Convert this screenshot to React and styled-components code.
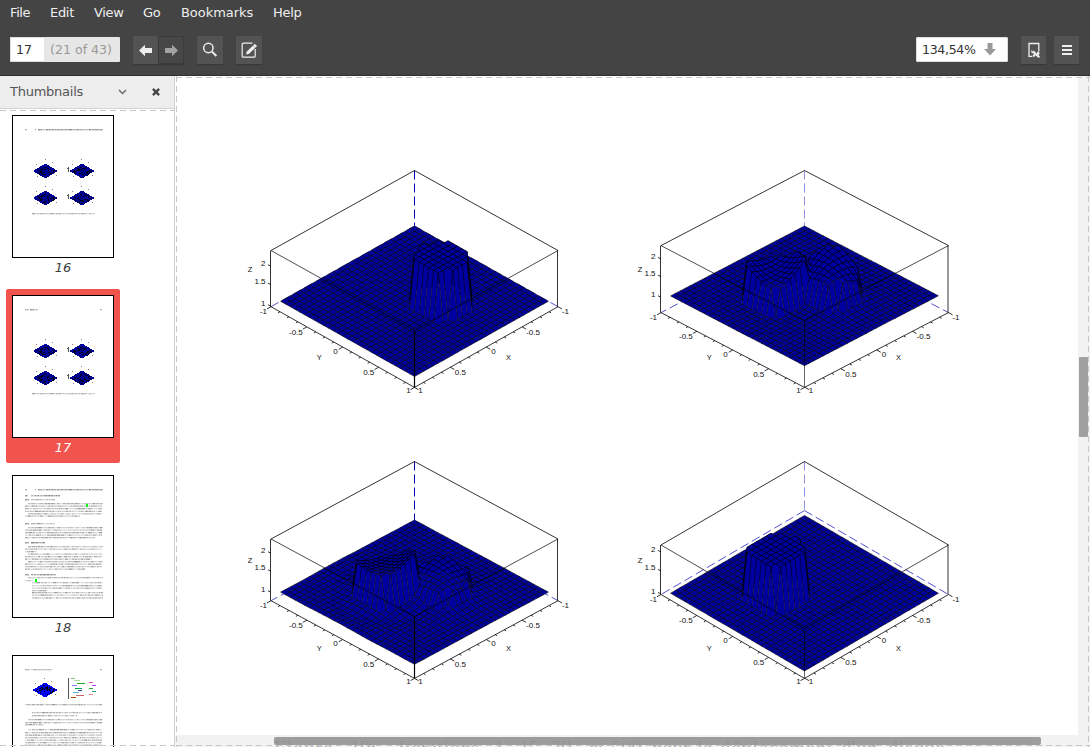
import React from "react";
import styled, { createGlobalStyle } from "styled-components";

const Global = createGlobalStyle`
  * { box-sizing: border-box; }
  body { margin: 0; overflow: hidden; background: #fff; }
`;
const App_ = styled.div`
  width: 1090px; height: 747px; display: flex; flex-direction: column; overflow: hidden;
  font: 13px "DejaVu Sans", sans-serif; color: #3c3c3c; background: #fff;
`;
const Header = styled.header`
  height: 76px; flex: none; background: #444; border-bottom: 1px solid #303030;
`;
const MenuBar = styled.nav`
  height: 26px; padding: 0 10px; display: flex; align-items: center; color: #eee;
`;
const MenuItem = styled.span`
  line-height: 26px; width: ${(p) => p.$w}px; letter-spacing: ${(p) => p.$track}px; white-space: nowrap;
`;
const Toolbar = styled.div`
  height: 48px; padding: 0 11px 0 10px; display: flex; align-items: center;
`;
const PageBox = styled.div`
  width: 110px; height: 25px; margin-bottom: 1px; display: flex; line-height: 25px; border-radius: 1px; overflow: hidden;
  background: #e6e6e6; color: #999; font-size: 12.6px;
`;
const PageInput = styled.span`
  width: 34px; padding-left: 5px; margin-right: 6px; background: #fff; color: #333; border: 1px solid #ddd; line-height: 23px; border-right: 0;
`;
const PageCount = styled.span` white-space: nowrap; `;
const ToolButton = styled.button`
  width: ${(p) => p.$w || 25}px; height: 28px; padding: 0; margin-left: ${(p) => p.$gap || 0}px;
  border: ${(p) => (p.$disabled ? "1px solid #3b3b3b" : "0")};
  background: ${(p) => (p.$disabled ? "#474747" : "#535353")};
  box-shadow: 0 1px 1px rgba(0,0,0,.15);
  display: flex; align-items: center; justify-content: center;
`;
const Spacer = styled.div` flex: 1; `;
const ZoomBox = styled.div`
  width: 92px; height: 25px; margin-bottom: 1px; background: #fff; border: 1px solid #ddd; display: flex; align-items: center; border-radius: 1px;
  padding: 0 11px 0 5px; justify-content: space-between; color: #333; white-space: nowrap; font-size: 12.6px;
`;
const ZoomValue = styled.span` letter-spacing: -.35px; `;
const Body = styled.div` flex: 1; min-height: 0; display: flex; `;
const Sidebar = styled.aside`
  width: 175px; flex: none; border-right: 1px solid #d0d0d0; display: flex; flex-direction: column; overflow: hidden;
`;
const SideHead = styled.div`
  height: 33px; flex: none; background: #ededed; border-bottom: 1px solid #d2d2d2; display: flex; align-items: center;
  padding: 0 14px 1px 10px; color: #555; gap: 25px; letter-spacing: -.25px;
`;
const SideTitle = styled.span` flex: 1; line-height: 31px; `;
const ThumbList = styled.div` position: relative; flex: 1; min-height: 0; padding: 0 6px; overflow: hidden; `;
const Thumb = styled.div`
  width: 114px; height: 174px; margin-bottom: 6px; padding: 6px 6px 0; border-radius: 2px;
  display: flex; flex-direction: column; align-items: center;
  background: ${(p) => (p.$active ? "#f0544c" : "transparent")}; color: ${(p) => (p.$active ? "#fff" : "#3c3c3c")};
  font-style: italic;
`;
const Paper = styled.svg` width: 102px; height: 143px; flex: none; background: #fff; border: 1px solid #000; display: block; `;
const ThumbLabel = styled.span` line-height: 20px; `;
const Document = styled.main` position: relative; flex: 1; overflow: hidden; background: #fff; padding: 75px 0 0 45px; `;
const PlotGrid = styled.div` display: grid; grid-template-columns: 390px 390px; grid-auto-rows: 291px; `;
const Plot = styled.svg` width: 390px; height: 291px; display: block; `;
const Caption = styled.div`
  margin-top: 3px; padding-left: 54px; display: flex; font: 20.5px/24px "Liberation Serif", serif; color: #333;
`;
const CaptionWord = styled.span` width: ${(p) => p.$w}px; flex: none; white-space: nowrap; letter-spacing: ${(p) => p.$track || 0}px; `;
const Edge = styled.div`
  position: absolute; ${(p) => p.$pos}
  background: repeating-linear-gradient(${(p) => (p.$vert ? "180deg" : "90deg")}, #c8c8c8 0 6px, transparent 6px 10px);
`;
const VTrack = styled.div` position: absolute; right: 0; top: 0; bottom: 0; width: 12px; background: rgba(235,235,235,.65); `;
const VThumb = styled.div` margin: 281px 0 0 1px; width: 9px; height: 80px; border-radius: 1px; background: #a0a0a0; `;
const HTrack = styled.div` position: absolute; left: 0; right: 12px; bottom: 0; height: 12px; background: rgba(235,235,235,.65); `;
const HThumb = styled.div` margin: 2px 0 0 99px; width: 767px; height: 8px; border-radius: 2px; background: rgba(145,145,145,.88); `;

const CX = 194.5;
const HALF = 143.5;
const N = 28;

/* Distance of a point from a disc centre, in screen-aligned axes (u to the right, v to the front). */
const disc = (u, v, cu, cv) => ({ du: (u - cu) / 0.39, dv: (v - cv) / 0.39 });
const inside = (d) => d.du * d.du + d.dv * d.dv <= 1.17;
const LEFT = [-0.39, 0.06];
const RIGHT = [0.38, 0.05];

const heights = {
  right: (u, v) => (inside(disc(u, v, ...RIGHT)) ? 47 : 0),
  left: (u, v) => (inside(disc(u, v, ...LEFT)) ? 46 : 0),
  saddle: (u, v) => {
    const a = disc(u, v, ...LEFT);
    const b = disc(u, v, ...RIGHT);
    if (inside(a)) return 26 + 11 * a.du * a.du - 1 * a.dv + 3 * a.du;
    if (inside(b)) return 34 - 11 * b.du * b.du - 5 * b.dv;
    const r = Math.hypot(a.du, a.dv);
    const q = Math.hypot(b.du, b.dv);
    return -2 * Math.exp(-(r - 1) * 1.6) + 4 * Math.exp(-(q - 1) * 2);
  },
  wave: (u, v) => {
    const a = disc(u, v, ...LEFT);
    const b = disc(u, v, ...RIGHT);
    if (inside(a)) return 29 + 8 * a.du * a.du + 6 * a.dv + 5 * a.du;
    if (inside(b)) return 21 - 9 * b.du * b.du - 3 * b.dv + (b.du > 0.85 ? 9 : 0);
    const r = Math.hypot(a.du, a.dv);
    const q = Math.hypot(b.du, b.dv);
    const back = Math.max(0, -a.dv) * 9 * Math.exp(-(r - 1) * 2);
    return back + 2.5 * Math.exp(-(r - 1) * 1.3) * Math.cos(r * 5) + 6 * Math.exp(-(q - 1) * 2);
  },
};

const plots = [
  { back: 75, front: 225.5, top: 99.5, bottom: 155.7, h: "right", z: [112.3, 130.7, 152.3], strong: true },
  { back: 75, front: 214.7, top: 94.6, bottom: 161.6, h: "saddle", z: [105, 122.7, 143.3] },
  { back: 78, front: 222.3, top: 97, bottom: 158.7, h: "wave", z: [108.3, 126.3, 147.3], strong: true },
  { back: 73.4, front: 229, top: 103, bottom: 152.5, h: "left", z: [107, 126, 149] },
];

/* Surface cells ordered from the back to the front, so that nearer cells cover farther ones. */
function quads(p) {
  const mid = (p.back + p.front) / 2;
  const k = (p.front - p.back) / 2 / 1.867;
  const pt = (i, j) => {
    const X = (i - 14) / 15;
    const Y = (j - 14) / 15;
    const u = Y - X;
    const v = X + Y;
    return { x: CX + (u * HALF) / 2, y: mid + v * k - heights[p.h](u, v) };
  };
  const out = [];
  for (let s = 0; s <= 2 * N - 2; s++)
    for (let i = Math.max(0, s - N + 1); i <= Math.min(N - 1, s); i++) {
      const j = s - i;
      const c = [pt(i, j), pt(i + 1, j), pt(i + 1, j + 1), pt(i, j + 1)];
      const ys = c.map((q) => q.y);
      out.push({
        points: c.map((q) => `${q.x.toFixed(1)},${q.y.toFixed(1)}`).join(" "),
        wall: Math.max(...ys) - Math.min(...ys) > 18,
      });
    }
  return out;
}

function Surface({ p }) {
  const L = CX - 143.5;
  const R = CX + 143.5 + (p.strong ? 0 : 0.5);
  const F = 236.4;
  const T = 19.5;
  const slope = F - p.bottom;
  const floorBack = p.bottom - slope;
  const frontTop = p.top + (p.top - T);
  const ticks = [];
  for (let n = 0; n <= 16; n++) {
    const t = n / 16;
    const len = n % 4 === 0 ? 4 : 2;
    const y = p.bottom + slope * t;
    ticks.push(`M${L + 143.5 * t} ${y}l${-len} ${len * 0.56}M${R - 143.5 * t} ${y}l${len} ${len * 0.56}`);
  }
  const names = ["-1", "-0.5", "0", "0.5", "1"];
  const dx = [-7.5, -11, -7.2, -10, -6.2];
  const dim = p.strong ? "#0000b4" : "#8f8fe4";
  return (
    <Plot viewBox="0 0 390 291">
      <g fill="none" stroke={dim} strokeDasharray="9 4">
        <path d={`M${CX} ${T}V${floorBack}`} />
        <path d={`M${CX} ${floorBack}L${L} ${p.bottom}M${CX} ${floorBack}L${R} ${p.bottom}`} stroke="#4040c8" strokeWidth=".9" />
      </g>
      <g fill="#0000a0" stroke="#000">
        {quads(p).map((q, i) => <polygon key={i} points={q.points} strokeWidth={q.wall ? 0.4 : 0.55} />)}
      </g>
      <g fill="none" stroke="#000" strokeWidth=".8">
        <path d={`M${L} ${p.top}L${CX} ${T}L${R} ${p.top}`} />
        <path d={`M${L} ${p.top}L${CX} ${frontTop}L${R} ${p.top}`} strokeWidth=".7" />
        <path d={`M${L} ${p.bottom}L${CX} ${F}L${R} ${p.bottom}`} />
        <path d={`M${L - 0.5} ${p.top}V${p.bottom}M${R - 0.5} ${p.top}V${p.bottom}`} />
        {p.strong
          ? <path d={`M${CX} ${frontTop}V${F}`} strokeWidth="1.2" />
          : <path d={`M${CX} ${frontTop}V${F}`} strokeWidth=".6" />}
        <path d={ticks.join("")} />
        <path d={p.z.map((z) => `M${L} ${z + 3}l-3 -1.6`).join("")} />
      </g>
      <g fill="#111" fontFamily='"Liberation Sans", sans-serif' fontSize="8" textAnchor="middle">
        {names.map((n, i) => {
          const y = p.bottom + (slope * i) / 4 + (i === 0 ? 7 : i === 2 ? 6.6 : 8);
          return (
            <React.Fragment key={n}>
              <text x={L + 35.9 * i + dx[i]} y={Math.min(y, 242.3)}>{n}</text>
              <text x={R - 35.9 * i - dx[i]} y={Math.min(y, 242.3)}>{n}</text>
            </React.Fragment>
          );
        })}
        <text x="99.3" y="209" fontSize="7.5">Y</text>
        <text x="288.5" y="209" fontSize="7.5">X</text>
        <text x="30" y="121.3" fontSize="7.5">Z</text>
        {["2", "1.5", "1"].map((n, i) => <text key={n} x={i === 1 ? 40 : 43.3} y={p.z[i] + (i === 1 ? 2 : 2.6)}>{n}</text>)}
      </g>
    </Plot>
  );
}

const noise = (n) => { const v = Math.sin(n * 127.1) * 43758.5; return v - Math.floor(v); };

/* A row of illegible micro text: short grey runs with uneven tone. */
function MicroLine({ x, y, w, seed = 1, bold }) {
  const runs = [];
  let at = x;
  let n = seed * 31;
  while (at < x + w) {
    const len = Math.min(1 + noise(n) * 3, x + w - at);
    runs.push(<rect key={n} x={at} y={y} width={len} height={bold ? 1.4 : 1.3} fillOpacity={(bold ? 0.28 : 0.16) + noise(n + 7) * 0.3} />);
    at += len + 0.45;
    n++;
  }
  return <g fill="#222">{runs}</g>;
}

function MiniPlot({ x, y, bright, axis }) {
  const specks = Array.from({ length: 42 }, (_, i) => {
    const a = (noise(i + x) - 0.5) * 18;
    const b = (noise(i * 3 + y) - 0.5) * 2 * (6 - Math.abs(a) * 0.5);
    return <rect key={i} x={Math.round(x + a)} y={Math.round(y + b)} width={i % 3 ? 1 : 2} height="1" />;
  });
  return (
    <g shapeRendering="crispEdges">
      <path d={`M${x - 12.5} ${y}L${x} ${y - 7.5}L${x + 12.5} ${y}L${x} ${y + 7.5}Z`} fill={bright ? "#0000f4" : "#000096"} />
      <g fill="#00001c">{specks}</g>
      <g fill="#888">
        <rect x={x - 1} y={y - 12} width="1" height="1" /><rect x={x + 6} y={y - 9} width="1" height="1" />
        <rect x={x - 10} y={y - 7} width="1" height="1" /><rect x={x - 9} y={y + 5} width="1" height="1" />
        <rect x={x + 10} y={y + 4} width="1" height="1" />
      </g>
      {axis && <path d={`M${x - 13.5} ${y - 4}v5M${x - 15.5} ${y - 3}h1`} stroke="#555" fill="none" />}
    </g>
  );
}

const FigurePage = ({ shortHead }) => (
  <Paper viewBox="0 0 100 141">
    {shortHead
      ? <><MicroLine x={12} y={13} w={4} /><MicroLine x={17} y={13} w={8} bold /><MicroLine x={87} y={13} w={2} /></>
      : <><MicroLine x={12} y={13} w={2} /><MicroLine x={22} y={13} w={1} /><MicroLine x={25} y={13} w={65} bold /></>}
    <MiniPlot x={32.5} y={55} /><MiniPlot x={69} y={55} axis />
    <MiniPlot x={32.5} y={82} /><MiniPlot x={69} y={82} axis />
    <MicroLine x={19} y={97} w={63} seed={3} />
  </Paper>
);

const bodyRows = [
  [15, 75, 27], [12, 77, 29.5], [12, 77, 32], [12, 77, 34.7], [15, 74, 37.2], [12, 55, 39.5],
  [15, 75, 51], [12, 77, 53.5], [12, 77, 56], [12, 77, 58.5], [12, 70, 61],
  [15, 75, 70], [12, 77, 72.5], [12, 12, 75], [15, 74, 77.5], [12, 77, 80], [12, 67, 82.5],
  [15, 75, 85], [12, 77, 87.5], [12, 77, 90], [12, 60, 92.5],
  [15, 75, 101], [12, 8, 104], [19, 71, 106], [19, 70, 109], [19, 70, 111.5], [19, 15, 114], [19, 71, 116], [19, 71, 118.5], [19, 71, 121.3],
];
const TextPage = () => (
  <Paper viewBox="0 0 100 141">
    <MicroLine x={12} y={13} w={2} /><MicroLine x={22} y={13} w={1} /><MicroLine x={25} y={13} w={65} bold />
    <MicroLine x={12} y={19} w={3} bold /><MicroLine x={18} y={19} w={29} bold seed={2} />
    {[[24, 24], [48, 24], [67, 14], [99, 25]].map(([y, w]) => (
      <g key={y}><MicroLine x={12} y={y - 1} w={4} bold /><MicroLine x={18} y={y - 1} w={w} seed={y} bold={w !== 24} /></g>
    ))}
    {bodyRows.map(([x, w, y], i) => <MicroLine key={y} x={x} y={y} w={w} seed={i + 5} />)}
    <rect x="73" y="28" width="2" height="3" fill="#0f0" /><rect x="22" y="103" width="2" height="3" fill="#0f0" />
  </Paper>
);
const MixedPage = () => (
  <Paper viewBox="0 0 100 141">
    <MicroLine x={12} y={13} w={27} /><MicroLine x={87} y={13} w={2} />
    <MiniPlot x={32} y={34} bright />
    <path d="M55.5 22v21" stroke="#555" />
    <g shapeRendering="crispEdges">
      {["#7c7", "#a8d8a8", "#2a2", "#88f", "#0a5", "#33a", "#5bd", "#c66", "#a40"].map((c, i) => (
        <rect key={i} x={58 + (i * 3) % 8} y={22 + i * 2.4} width={4 + (i * 2) % 5} height="1" fill={c} />
      ))}
      {["#e5a", "#a4f", "#3a3", "#2a8", "#e88"].map((c, i) => (
        <rect key={c} x={76 + (i * 3) % 6} y={26 + i * 3} width="4" height="1" fill={c} />
      ))}
    </g>
    <MicroLine x={12} y={48} w={77} seed={4} />
    <MicroLine x={19} y={56} w={70} seed={8} /><MicroLine x={19} y={59} w={45} seed={9} />
    {[63, 66, 68, 73, 76, 78.5, 81, 83.5, 86, 88.5, 91].map((y, i) => (
      <MicroLine key={y} x={i === 0 || i === 3 ? 15 : 12} y={y} w={i === 2 ? 19 : i === 0 || i === 3 ? 74 : 77} seed={i + 11} />
    ))}
  </Paper>
);

const Arrow = ({ flip, color }) => (
  <svg width="14" height="13" viewBox="0 0 14 13">
    <path d={flip ? "M14 6.5L8 .7V4H1v5h7v3.3z" : "M0 6.5L6 .7V4h7v5H6v3.3z"} fill={color} />
  </svg>
);

const menu = [["File", 40, -0.4], ["Edit", 44, -0.3], ["View", 49, -0.3], ["Go", 38, -0.4], ["Bookmarks", 92, -0.05], ["Help", 30, -0.3]];
const caption = [
  ["Figure", 76, 0.9], ["19:", 48], ["Iterations", 96, 0.4], ["1,", 25], ["15,", 32], ["30", 38], ["et", 22], ["500", 41],
  ["pour", 45], ["le", 23], ["déplacement", 121, 0.9], ["d'un", 47, 0.6], ["disque", 60, 0.6],
];

export default function App() {
  return (
    <App_>
      <Global />
      <Header>
        <MenuBar>{menu.map(([m, w, t]) => <MenuItem key={m} $w={w} $track={t}>{m}</MenuItem>)}</MenuBar>
        <Toolbar>
          <PageBox><PageInput>17</PageInput><PageCount>(21 of 43)</PageCount></PageBox>
          <ToolButton $gap={13}><Arrow color="#eee" /></ToolButton>
          <ToolButton $disabled $w={26}><Arrow flip color="#a2a2a2" /></ToolButton>
          <ToolButton $gap={13} $w={26}>
            <svg width="16" height="16" fill="none" stroke="#eee"><circle cx="6.4" cy="6" r="4.7" strokeWidth="1.5" /><path d="M10 9.7l4.4 4.3" strokeWidth="2" /></svg>
          </ToolButton>
          <ToolButton $gap={13} $w={26}>
            <svg width="17" height="17" fill="none" stroke="#eee"><path d="M11.5 1.2H2.2Q1.2 1.2 1.2 2.2v12Q1.2 15.2 2.2 15.2h11Q14.2 15.2 14.2 14.2V7" strokeWidth="1.2" /><path d="M5 12.6l.8-3.1 6.3-6 2.2 2.2-6.2 6z" fill="#eee" stroke="none" /><path d="M13 2.7l2.2 2.1" strokeWidth="2.3" /></svg>
          </ToolButton>
          <Spacer />
          <ZoomBox><ZoomValue>134,54%</ZoomValue><svg width="12" height="13"><path d="M3.5 0h5v6H12L6 12.5 0 6h3.5z" fill="#999" /></svg></ZoomBox>
          <ToolButton $gap={13}>
            <svg width="14" height="16" fill="none"><path d="M5 14.4H2V1.5h9.8v8" stroke="#eee" strokeWidth="1.3" /><path d="M4.2 8l2.2 2V8.3L8.5 10l.6 1.8 2-2.5 1.8 2.2-1.4 1.3 1.9 2.7h-2.7L8.7 13.2 6.6 15.2l-1.3-1.2 2-2.3-2.8-.7z" fill="#eee" /></svg>
          </ToolButton>
          <ToolButton $gap={8}><svg width="10" height="10"><path d="M0 1h10M0 5h10M0 9h10" stroke="#eee" strokeWidth="2" /></svg></ToolButton>
        </Toolbar>
      </Header>
      <Body>
        <Sidebar>
          <SideHead>
            <SideTitle>Thumbnails</SideTitle>
            <svg width="9" height="6" fill="none" stroke="#666" strokeWidth="1.3"><path d="M1 1l3.5 3.5L8 1" /></svg>
            <svg width="8" height="8" fill="none" stroke="#444" strokeWidth="2.3"><path d="M.9.9l6.2 6.2M7.1.9L.9 7.1" /></svg>
          </SideHead>
          <ThumbList>
            <Thumb><FigurePage /><ThumbLabel>16</ThumbLabel></Thumb>
            <Thumb $active><FigurePage shortHead /><ThumbLabel>17</ThumbLabel></Thumb>
            <Thumb><TextPage /><ThumbLabel>18</ThumbLabel></Thumb>
            <Thumb><MixedPage /></Thumb>
            <Edge $pos="left:0;right:0;top:1px;height:1px;" />
            <Edge $pos="left:0;right:0;bottom:1px;height:1px;" />
          </ThumbList>
        </Sidebar>
        <Document>
          <PlotGrid>{plots.map((p) => <Surface key={p.h} p={p} />)}</PlotGrid>
          <Caption>{caption.map(([t, w, s]) => <CaptionWord key={t} $w={w} $track={s}>{t}</CaptionWord>)}</Caption>
          <VTrack><VThumb /></VTrack>
          <HTrack><HThumb /></HTrack>
          <Edge $pos="left:1px;right:0;top:1px;height:1px;" />
          <Edge $pos="left:1px;right:0;bottom:1px;height:1px;" />
          <Edge $vert $pos="left:1px;top:0;bottom:0;width:1px;" />
          <Edge $vert $pos="right:1px;top:0;bottom:0;width:1px;" />
        </Document>
      </Body>
    </App_>
  );
}
